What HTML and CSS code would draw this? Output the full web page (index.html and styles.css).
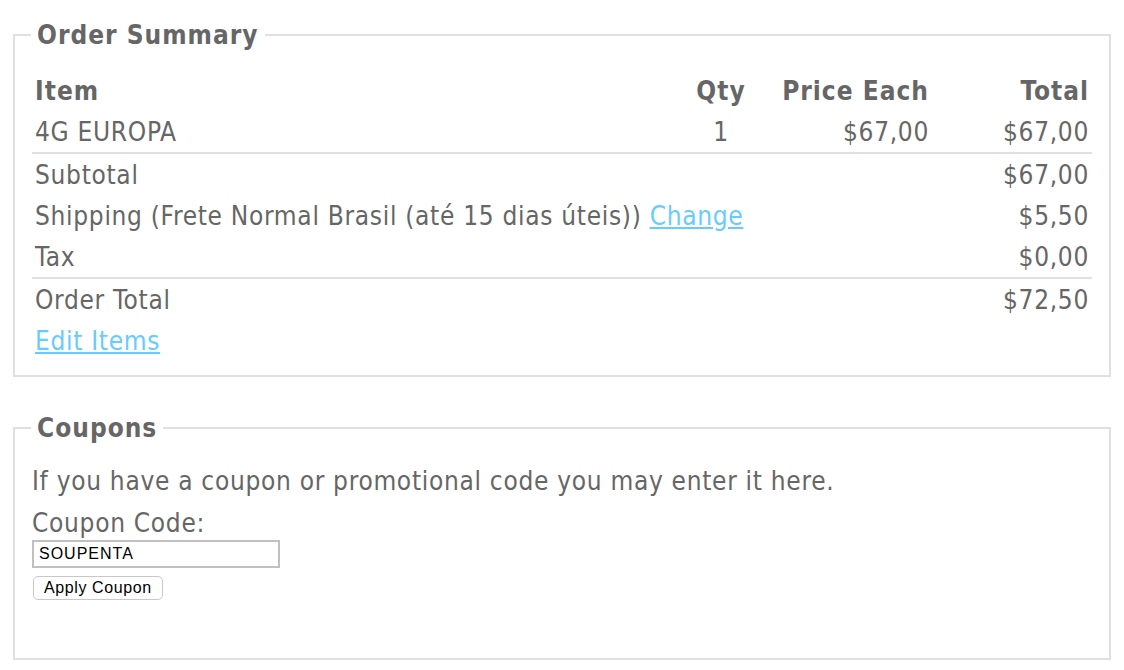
FILE: index.html
```html
<!DOCTYPE html>
<html lang="en">
<head>
    <meta charset="UTF-8">
    <title>Order Summary</title>
    <link rel="stylesheet" href="styles.css">
</head>
<body>

    <fieldset class="box">
        <legend>Order Summary</legend>
        <table class="summary">
            <tr class="head">
                <th class="item">Item</th>
                <th class="qty">Qty</th>
                <th class="num price">Price Each</th>
                <th class="num total">Total</th>
            </tr>
            <tr class="line">
                <td class="item">4G EUROPA</td>
                <td class="qty">1</td>
                <td class="num price">$67,00</td>
                <td class="num total">$67,00</td>
            </tr>
            <tr>
                <td colspan="3">Subtotal</td>
                <td class="num">$67,00</td>
            </tr>
            <tr>
                <td colspan="3">Shipping (Frete Normal Brasil (até 15 dias úteis)) <a href="#">Change</a></td>
                <td class="num">$5,50</td>
            </tr>
            <tr class="line">
                <td colspan="3">Tax</td>
                <td class="num">$0,00</td>
            </tr>
            <tr>
                <td colspan="3">Order Total</td>
                <td class="num">$72,50</td>
            </tr>
            <tr>
                <td colspan="4"><a href="#">Edit Items</a></td>
            </tr>
        </table>
    </fieldset>

    <fieldset class="box coupons">
        <legend>Coupons</legend>
        <p>If you have a coupon or promotional code you may enter it here.</p>
        <label for="coupon">Coupon Code:</label>
        <input type="text" id="coupon" value="SOUPENTA">
        <button>Apply Coupon</button>
    </fieldset>

</body>
</html>
```

FILE: styles.css
```css
body {
    font-family: "DejaVu Sans Condensed", "DejaVu Sans", sans-serif;
    font-size: 26px;
    letter-spacing: 0.7px;
    color: #666;
    margin: 0;
    padding: 0 13px;
}

.box {
    border: 2px solid #e0e0e0;
    margin: 20px 0 0;
    padding: 20px 17px 14px;
}

.box legend {
    font-weight: bold;
    letter-spacing: 1px;
    padding: 0 6px;
    margin-left: -1px;
    line-height: 30px;
}

.summary {
    width: 100%;
    border-collapse: collapse;
}

.summary th,
.summary td {
    padding: 0 3px;
    height: 41px;
    text-align: left;
    white-space: nowrap;
}

.summary th {
    letter-spacing: 1px;
}

.summary .qty {
    text-align: center;
    width: 74px;
}

.summary .num {
    text-align: right;
}

.summary .price {
    width: 165px;
}

.summary .total {
    width: 154px;
}

.summary tr.line td {
    border-bottom: 2px solid #e0e0e0;
}

a {
    color: #66ccff;
}

.coupons {
    margin-top: 36px;
    padding-top: 17px;
    padding-left: 17px;
    padding-bottom: 58px;
}

.coupons p {
    margin: 0;
    line-height: 42px;
}

.coupons label {
    display: block;
    margin-top: 4px;
    line-height: 34px;
}

.coupons input {
    display: block;
    width: 248px;
    height: 28px;
    box-sizing: border-box;
    border: 2px solid #c0c0c0;
    font-family: "Liberation Sans", Arial, sans-serif;
    font-size: 16px;
    letter-spacing: 1px;
    color: #000;
    padding: 0 5px;
    margin: 0;
}

.coupons button {
    display: block;
    margin: 8px 0 0 1px;
    height: 24px;
    padding: 0 10px;
    background: #fff;
    border: 1px solid #c8c8c8;
    border-radius: 5px;
    font-family: "Liberation Sans", Arial, sans-serif;
    font-size: 16px;
    letter-spacing: 0.6px;
    color: #000;
}
```
